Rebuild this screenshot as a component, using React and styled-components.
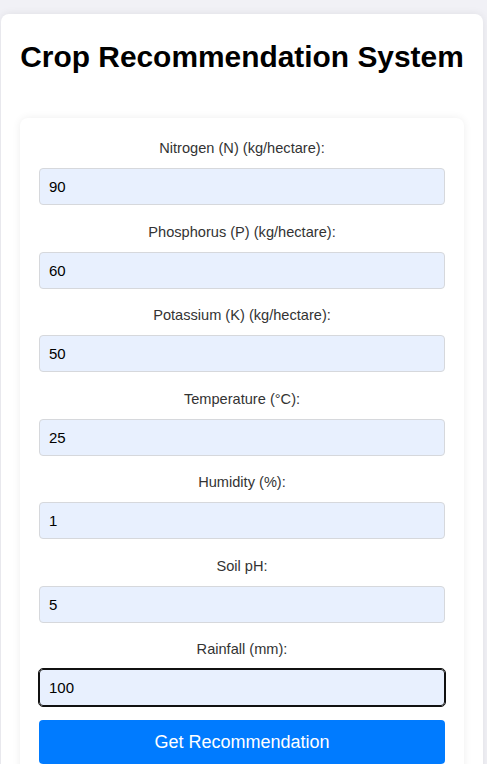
import React, { useState } from 'react'
import styled, { createGlobalStyle } from 'styled-components'

const GlobalStyle = createGlobalStyle`
  html, body {
    margin: 0;
    padding: 0;
    background: #f1f1f6;
    font-family: "Liberation Sans", Arial, sans-serif;
  }
  * { box-sizing: border-box; }
`

const Page = styled.div`
  padding: 14px 4px 0 1px;
`

const Card = styled.div`
  background: #fff;
  border-radius: 8px;
  box-shadow: 0 0 8px rgba(0, 0, 0, 0.08);
  padding: 25px 19px 0 19px;
  min-height: 760px;
`

const Title = styled.h1`
  margin: 0 0 43px 0;
  text-align: center;
  font-size: 29.9px;
  font-weight: bold;
  color: #000;
  line-height: 36px;
  white-space: nowrap;
`

const Form = styled.form`
  background: #fff;
  border-radius: 8px;
  box-shadow: 0 0 8px rgba(0, 0, 0, 0.07);
  padding: 22px 19px 20px 19px;
  display: flex;
  flex-direction: column;
`

const Field = styled.div`
  display: flex;
  flex-direction: column;
  margin-bottom: 18.5px;
`

const Label = styled.label`
  text-align: center;
  font-size: 14.6px;
  color: #333;
  line-height: 17px;
  margin-bottom: 11px;
`

const Input = styled.input`
  height: 37px;
  padding: 0 9px;
  font-family: "Liberation Sans", Arial, sans-serif;
  font-size: 15px;
  color: #000;
  background: #e8f0fe;
  border: 1px solid ${p => (p.$active ? '#111' : '#d6d8dc')};
  outline: ${p => (p.$active ? '1px solid #111' : 'none')};
  border-radius: 4px;
`

const Button = styled.button`
  height: 44px;
  border: none;
  border-radius: 4px;
  background: #007bff;
  color: #fff;
  font-family: "Liberation Sans", Arial, sans-serif;
  font-size: 18px;
  cursor: pointer;
  margin-top: -4.5px;
`

const fields = [
  { label: 'Nitrogen (N) (kg/hectare):', value: '90' },
  { label: 'Phosphorus (P) (kg/hectare):', value: '60' },
  { label: 'Potassium (K) (kg/hectare):', value: '50' },
  { label: 'Temperature (°C):', value: '25' },
  { label: 'Humidity (%):', value: '1' },
  { label: 'Soil pH:', value: '5' },
  { label: 'Rainfall (mm):', value: '100' },
]

export default function App() {
  const [values, setValues] = useState(fields.map(f => f.value))

  return (
    <Page>
      <GlobalStyle />
      <Card>
        <Title>Crop Recommendation System</Title>
        <Form onSubmit={e => e.preventDefault()}>
          {fields.map((f, i) => (
            <Field key={f.label}>
              <Label>{f.label}</Label>
              <Input
                $active={i === fields.length - 1}
                value={values[i]}
                onChange={e => {
                  const next = [...values]
                  next[i] = e.target.value
                  setValues(next)
                }}
              />
            </Field>
          ))}
          <Button type="submit">Get Recommendation</Button>
        </Form>
      </Card>
    </Page>
  )
}
